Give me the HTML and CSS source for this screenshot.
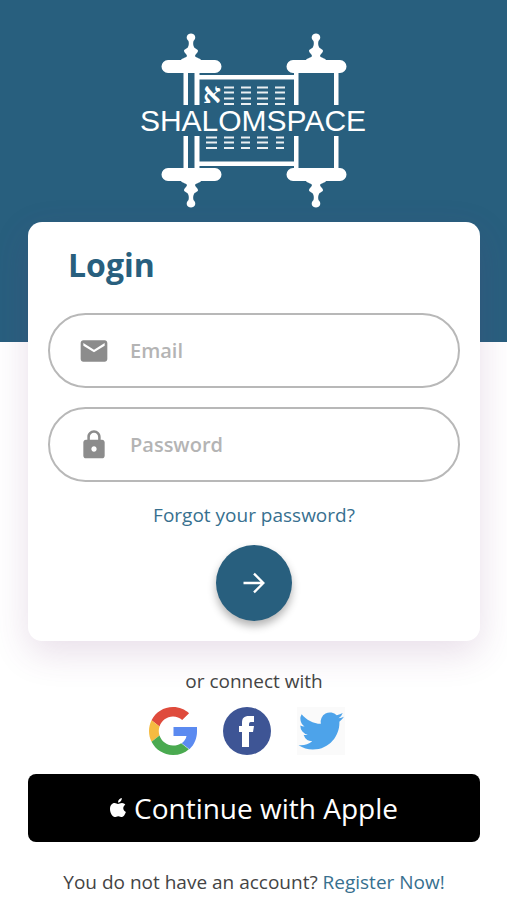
FILE: index.html
```
<!DOCTYPE html>
<html lang="en">
<head>
    <meta charset="UTF-8">
    <meta name="viewport" content="width=device-width, initial-scale=1.0">
    <title>Shalomspace - Login</title>
    <link rel="stylesheet" href="styles.css">
</head>
<body>
    <header class="banner">
        <svg class="logo" viewBox="138 30 232 180" role="img" aria-label="Shalomspace">
            <defs>
                <g id="finial">
                    <path d="M-2.500 41 C-6 38 -4 33.500 0 33.500 C4 33.500 6 38 2.500 41 C2 43 2 45 3 47 C4 49 7 49 7 51 C7 53 4 54 4 56 C5 58 9 58 10 60 H24 A6 6 0 0 1 24 73 H-23 A6 6 0 0 1 -23 60 H-10 C-9 58 -5 58 -4 56 C-4 54 -7 53 -7 51 C-7 49 -4 49 -3 47 C-2 45 -2 43 -2.500 41 Z"/>
                </g>
                <g id="half">
                    <use href="#finial" x="191"/>
                    <use href="#finial" x="316"/>
                    <path d="M183.500 72h4.500v33h-4.500zM194.500 72h5v33h-5zM294 72h4.500v33h-4.500zM334 72h4.500v33h-4.500zM199 75h96v4.500h-96z"/>
                </g>
            </defs>
            <g fill="#fff">
                <use href="#half"/>
                <use href="#half" transform="matrix(1 0 0 -1 0 241)"/>
                <text class="logo-letter" x="212" y="103" text-anchor="middle">א</text>
                <text class="logo-name" x="253" y="131" text-anchor="middle">SHALOMSPACE</text>
            </g>
            <path stroke="#fff" stroke-width="2" opacity="0.9" d="M224 87.500h10M241 87.500h10M257 87.500h11M275 87.500h10M224 92.500h10M241 92.500h10M257 92.500h11M275 92.500h10M224 98.500h10M241 98.500h10M257 98.500h11M275 98.500h10M224 104h10M241 104h10M257 104h11M275 104h10M206 137.500h11M224 137.500h10M241 137.500h9M257 137.500h11M276 137.500h8M206 142.500h11M224 142.500h10M241 142.500h9M257 142.500h11M276 142.500h8M206 148h11M224 148h10M241 148h9M257 148h11M276 148h8"/>
        </svg>
    </header>

    <main class="content">
        <form class="card">
            <h1>Login</h1>
            <label class="field">
                <svg viewBox="0 0 24 24"><path d="M20 4H4c-1.100 0-2 .9-2 2v12c0 1.100.9 2 2 2h16c1.100 0 2-.9 2-2V6c0-1.100-.9-2-2-2zm0 4l-8 5-8-5V6l8 5 8-5v2z"/></svg>
                <input type="email" placeholder="Email" aria-label="Email">
            </label>
            <label class="field">
                <svg viewBox="0 0 24 24"><path d="M18 8h-1V6c0-2.760-2.240-5-5-5S7 3.240 7 6v2H6c-1.100 0-2 .9-2 2v10c0 1.100.9 2 2 2h12c1.100 0 2-.9 2-2V10c0-1.100-.9-2-2-2zm-6 9c-1.100 0-2-.9-2-2s.9-2 2-2 2 .9 2 2-.9 2-2 2zm3.100-9H8.900V6c0-1.710 1.390-3.100 3.100-3.100s3.100 1.390 3.100 3.100v2z"/></svg>
                <input type="password" placeholder="Password" aria-label="Password">
            </label>
            <a class="forgot" href="#">Forgot your password?</a>
            <button class="submit" type="submit" aria-label="Log in">
                <svg viewBox="0 0 24 24"><path d="M3 12h17M12 4l8 8-8 8"/></svg>
            </button>
        </form>

        <p class="connect">or connect with</p>
        <div class="social">
            <a href="#" aria-label="Google">
                <svg viewBox="0 0 48 48">
                    <path fill="#df4b3c" d="M24 9.500c3.540 0 6.710 1.220 9.210 3.600l6.850-6.850C35.900 2.380 30.470 0 24 0 14.620 0 6.510 5.380 2.560 13.220l7.980 6.190C12.430 13.720 17.740 9.500 24 9.500z"/>
                    <path fill="#5b8af0" d="M48 20H24.500v9h13c-.6 3-2.260 5.480-4.780 7.180l7.730 6C45.500 37.600 48 31 48 24.500z"/>
                    <path fill="#f5bb41" d="M10.530 28.590c-.48-1.450-.76-2.990-.76-4.590s.27-3.140.76-4.590l-7.980-6.190C.92 16.460 0 20.120 0 24c0 3.880.92 7.540 2.560 10.780l7.970-6.190z"/>
                    <path fill="#4aaa50" d="M24 48c6.480 0 11.930-2.130 15.890-5.810l-7.730-6c-2.150 1.450-4.920 2.300-8.160 2.300-6.260 0-11.570-4.220-13.470-9.910l-7.980 6.190C6.510 42.620 14.620 48 24 48z"/>
                </svg>
            </a>
            <a href="#" aria-label="Facebook">
                <svg viewBox="0 0 48 48">
                    <circle cx="24" cy="24" r="24" fill="#3e5595"/>
                    <path fill="#fff" d="M19 40V25h-3v-6h3v-3c0-5 2-7 7-7h5v6h-3c-2 0-2 1-2 4h5l-1 6h-4v15z"/>
                </svg>
            </a>
            <a class="twitter" href="#" aria-label="Twitter">
                <svg viewBox="-0.800 -0.600 25.300 25.300"><path fill="#4da3ea" d="M23.950 4.570a10 10 0 0 1-2.820.78 4.960 4.960 0 0 0 2.160-2.730c-.95.560-2 .96-3.130 1.190a4.920 4.920 0 0 0-8.380 4.480C7.690 8.090 4.070 6.130 1.640 3.160a4.820 4.820 0 0 0-.67 2.480c0 1.710.87 3.210 2.190 4.090a4.900 4.900 0 0 1-2.230-.61v.06a4.920 4.920 0 0 0 3.950 4.830 5 5 0 0 1-2.210.08 4.940 4.940 0 0 0 4.600 3.420A9.870 9.870 0 0 1 0 19.540a14 14 0 0 0 7.550 2.210c9.050 0 14-7.500 14-13.980 0-.21 0-.42-.02-.63a9.940 9.940 0 0 0 2.420-2.570z"/></svg>
            </a>
        </div>
        <button class="apple" type="button">
            <svg viewBox="0 0 16 20"><path d="M8 6c1 0 2-1 4-1 1.400 0 2.600.7 3.300 1.800-3 1.800-2.500 6 .6 7.200C15 16.500 13.500 19 12 19c-1.400 0-2-.8-3.700-.8S6 19 4.700 19C2.500 19 0 15 0 11c0-3.600 2-6 4.600-6C6 5 7 6 8 6zM8 4.500C8 2 9.700.3 11.800 0 12 2.500 10 4.500 8 4.500z"/></svg>
            Continue with Apple
        </button>
        <p class="register">You do not have an account? <a href="#">Register Now!</a></p>
    </main>
</body>
</html>
```

FILE: styles.css
```
* {
    box-sizing: border-box;
}
body {
    margin: 0;
    background: #fff;
    color: #444;
    font-family: "Open Sans", "Noto Sans", sans-serif;
    font-size: 19px;
    line-height: 28px;
}
a {
    color: #37708f;
    text-decoration: none;
}
.banner {
    background: #285f7e;
    padding: 30px 0 132px;
    text-align: center;
}
.logo {
    display: block;
    width: 232px;
    height: 180px;
    margin: 0 auto;
}
.logo-name {
    font-family: "Liberation Sans", Arial, sans-serif;
    font-size: 30px;
}
.logo-letter {
    font-family: "Liberation Serif", serif;
    font-size: 28px;
    font-weight: bold;
}
.content {
    display: flex;
    flex-direction: column;
    margin-top: -120px;
    padding: 0 27px 0 28px;
}
.card {
    display: flex;
    flex-direction: column;
    align-items: center;
    background: #fff;
    border-radius: 14px;
    padding: 21px 20px 20px;
    box-shadow: 0 12px 36px rgba(110, 50, 120, 0.16);
}
h1 {
    align-self: stretch;
    margin: 0 0 26px;
    padding-left: 20px;
    color: #285f7e;
    font-size: 32px;
    line-height: 44px;
}
.field {
    display: flex;
    align-items: center;
    gap: 20px;
    width: 100%;
    height: 75px;
    margin-bottom: 19px;
    padding: 0 28px;
    border: 2px solid #b8b8b8;
    border-radius: 38px;
}
.field svg {
    flex: none;
    width: 32px;
    height: 32px;
    fill: #8c8c8c;
}
.field input {
    flex: 1;
    min-width: 0;
    padding: 0;
    border: none;
    outline: none;
    background: none;
    color: #444;
    font: inherit;
    font-size: 20px;
    font-weight: 600;
}
.field input::placeholder {
    color: #b4b4b4;
    opacity: 1;
}
.forgot {
    margin-bottom: 16px;
}
.submit {
    display: flex;
    align-items: center;
    justify-content: center;
    width: 76px;
    height: 76px;
    border: none;
    border-radius: 50%;
    background: #285f7e;
    box-shadow: 0 5px 8px rgba(0, 0, 0, 0.3);
    cursor: pointer;
}
.submit svg {
    width: 28px;
    height: 28px;
    fill: none;
    stroke: #fff;
    stroke-width: 2;
}
.connect {
    margin: 26px 0 12px;
    text-align: center;
}
.social {
    display: flex;
    justify-content: center;
    gap: 26px;
    margin-bottom: 19px;
    padding-right: 14px;
}
.social svg {
    display: block;
    width: 48px;
    height: 48px;
}
.twitter {
    background: #fafafa;
}
.apple {
    display: flex;
    align-items: center;
    justify-content: center;
    gap: 8px;
    height: 68px;
    border: none;
    border-radius: 8px;
    background: #000;
    color: #fff;
    font: inherit;
    font-size: 28px;
    font-weight: 500;
    cursor: pointer;
}
.apple svg {
    width: 16px;
    height: 20px;
    fill: #fff;
}
.register {
    margin: 26px 0 0;
    text-align: center;
}
```
